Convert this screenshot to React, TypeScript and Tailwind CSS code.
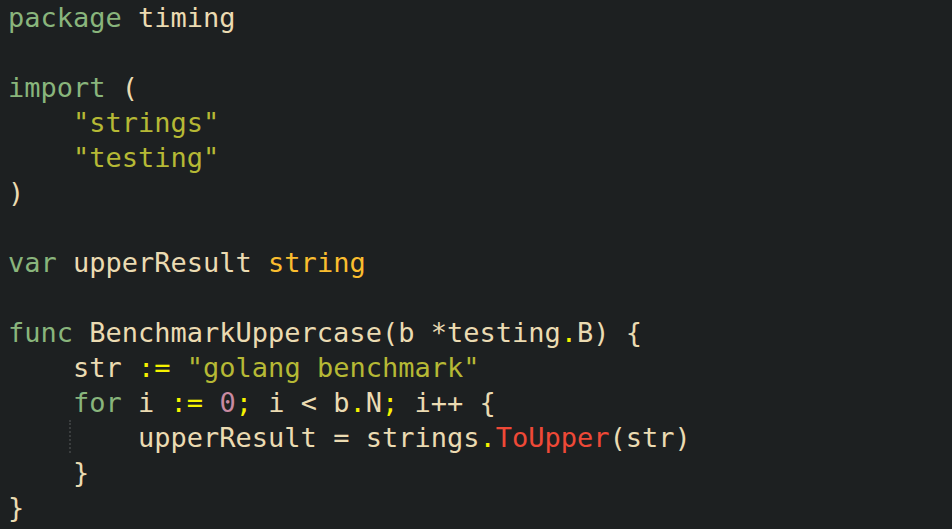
import React from 'react';

const kw = 'text-[#89b57c]';
const tx = 'text-[#ebdbb2]';
const st = 'text-[#b6b935]';
const ty = 'text-[#fabd2f]';
const pu = 'text-[#f5f200]';
const nu = 'text-[#c98aa1]';
const fn = 'text-[#ef4937]';

function Line({ children }: { children?: React.ReactNode }) {
	return <div className="h-[35px] whitespace-pre">{children}</div>;
}

export default function App() {
	return (
		<div
			className={`min-h-screen w-full bg-[#1d2021] pl-2 text-[27px] leading-[35px] ${tx}`}
			style={{ fontFamily: '"DejaVu Sans Mono", "Liberation Mono", monospace' }}
		>
			<Line>
				<span className={kw}>package</span> timing
			</Line>
			<Line />
			<Line>
				<span className={kw}>import</span> (
			</Line>
			<Line>
				{'    '}
				<span className={st}>"strings"</span>
			</Line>
			<Line>
				{'    '}
				<span className={st}>"testing"</span>
			</Line>
			<Line>)</Line>
			<Line />
			<Line>
				<span className={kw}>var</span> upperResult <span className={ty}>string</span>
			</Line>
			<Line />
			<Line>
				<span className={kw}>func</span> BenchmarkUppercase(b *testing
				<span className={pu}>.</span>B) {'{'}
			</Line>
			<Line>
				{'    '}str <span className={pu}>:=</span> <span className={st}>"golang benchmark"</span>
			</Line>
			<Line>
				{'    '}
				<span className={kw}>for</span> i <span className={pu}>:=</span> <span className={nu}>0</span>
				<span className={pu}>;</span> i &lt; b<span className={pu}>.</span>N<span className={pu}>;</span> i++ {'{'}
			</Line>
			<Line>
				{'    '}
				<span className="-ml-[4px] mr-[2px] inline-block h-[33px] w-0 border-l-2 border-dotted border-[#3a3d3e] align-top" />
				{'    '}upperResult = strings<span className={pu}>.</span>
				<span className={fn}>ToUpper</span>(str)
			</Line>
			<Line>{'    }'}</Line>
			<Line>{'}'}</Line>
		</div>
	);
}
